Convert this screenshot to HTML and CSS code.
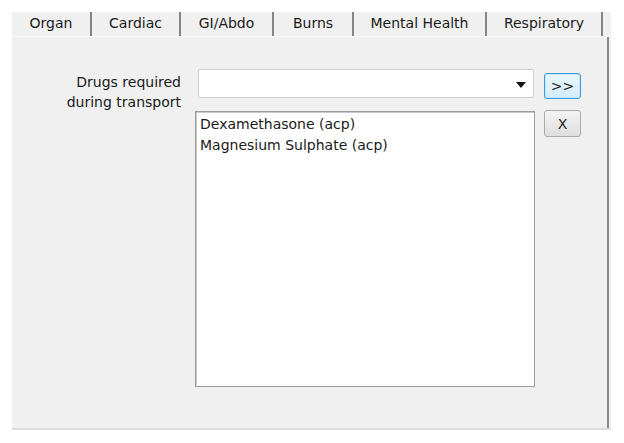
FILE: index.html
```html
<!DOCTYPE html>
<html lang="en">
<head>
    <meta charset="UTF-8">
    <meta name="viewport" content="width=device-width, initial-scale=1.0">
    <title>Transport - Drugs</title>
    <link rel="stylesheet" href="styles.css">
</head>
<body>
    <div class="panel">
        <div class="tabs">
            <div class="tab tab-organ">Organ</div>
            <div class="tab tab-cardiac">Cardiac</div>
            <div class="tab tab-gi">GI/Abdo</div>
            <div class="tab tab-burns">Burns</div>
            <div class="tab tab-mental">Mental Health</div>
            <div class="tab tab-resp">Respiratory</div>
        </div>
        <div class="content">
            <label class="field-label" for="drugSelect">Drugs required<br>during transport</label>
            <div class="field">
                <div class="combo" id="drugSelect">
                    <span class="combo-arrow"></span>
                </div>
                <div class="listbox">
                    <div class="list-item">Dexamethasone (acp)</div>
                    <div class="list-item">Magnesium Sulphate (acp)</div>
                </div>
            </div>
            <div class="actions">
                <button class="btn btn-add" type="button">&gt;&gt;</button>
                <button class="btn btn-remove" type="button">X</button>
            </div>
        </div>
    </div>
</body>
</html>
```

FILE: styles.css
```css
body {
    margin: 0;
    background-color: white;
    font-family: "DejaVu Sans", Verdana, sans-serif;
    font-size: 14px;
    color: #1a1a1a;
}
.panel {
    margin: 12px 0 0 12px;
    width: 599px;
    height: 416px;
    background-color: #f0f0f0;
    border-bottom: 2px solid #dcdcdc;
    display: flex;
    flex-direction: column;
}
.tabs {
    display: flex;
    height: 24px;
    border-bottom: 1px solid #f9f9f9;
}
.tab {
    line-height: 22px;
    text-align: center;
    border-right: 2px solid #858585;
    box-sizing: border-box;
}
.tab-organ { width: 80px; }
.tab-cardiac { width: 89px; }
.tab-gi { width: 93px; }
.tab-burns { width: 80px; }
.tab-mental { width: 133px; }
.tab-resp { width: 116px; }
.content {
    flex: 1;
    width: 595px;
    border-right: 2px solid #8a8a8a;
    display: flex;
    align-items: flex-start;
    padding-top: 32px;
}
.field-label {
    width: 169px;
    margin-top: 3px;
    text-align: right;
    line-height: 20px;
}
.field {
    width: 340px;
    margin-left: 14px;
    display: flex;
    flex-direction: column;
}
.combo {
    position: relative;
    height: 29px;
    margin: 0 1px 0 3px;
    background-color: white;
    border: 1px solid #cfcfcf;
    border-radius: 2px;
    box-sizing: border-box;
}
.combo-arrow {
    position: absolute;
    right: 7px;
    top: 12px;
    width: 0;
    height: 0;
    border-left: 5px solid transparent;
    border-right: 5px solid transparent;
    border-top: 6px solid #111;
}
.listbox {
    margin-top: 13px;
    height: 276px;
    background-color: white;
    border: 1px solid #9c9c9c;
    box-shadow: inset 1px 1px 0 #c8c8c8;
    box-sizing: border-box;
    padding: 2px 4px;
}
.list-item {
    line-height: 21px;
}
.actions {
    margin-left: 9px;
    margin-top: 4px;
    display: flex;
    flex-direction: column;
    gap: 11px;
}
.btn {
    width: 37px;
    font-family: "DejaVu Sans", Verdana, sans-serif;
    font-size: 14px;
    color: #222;
    border-radius: 3px;
    padding: 0;
    cursor: pointer;
}
.btn-add {
    height: 26px;
    border: 1px solid #3c9be0;
    background: linear-gradient(#eaf6fd, #d3ecfa);
    box-shadow: inset 0 0 0 1px #c6e6fa;
}
.btn-remove {
    height: 27px;
    border: 1px solid #aaaaaa;
    background: linear-gradient(#f4f4f4, #dedede);
}
```
